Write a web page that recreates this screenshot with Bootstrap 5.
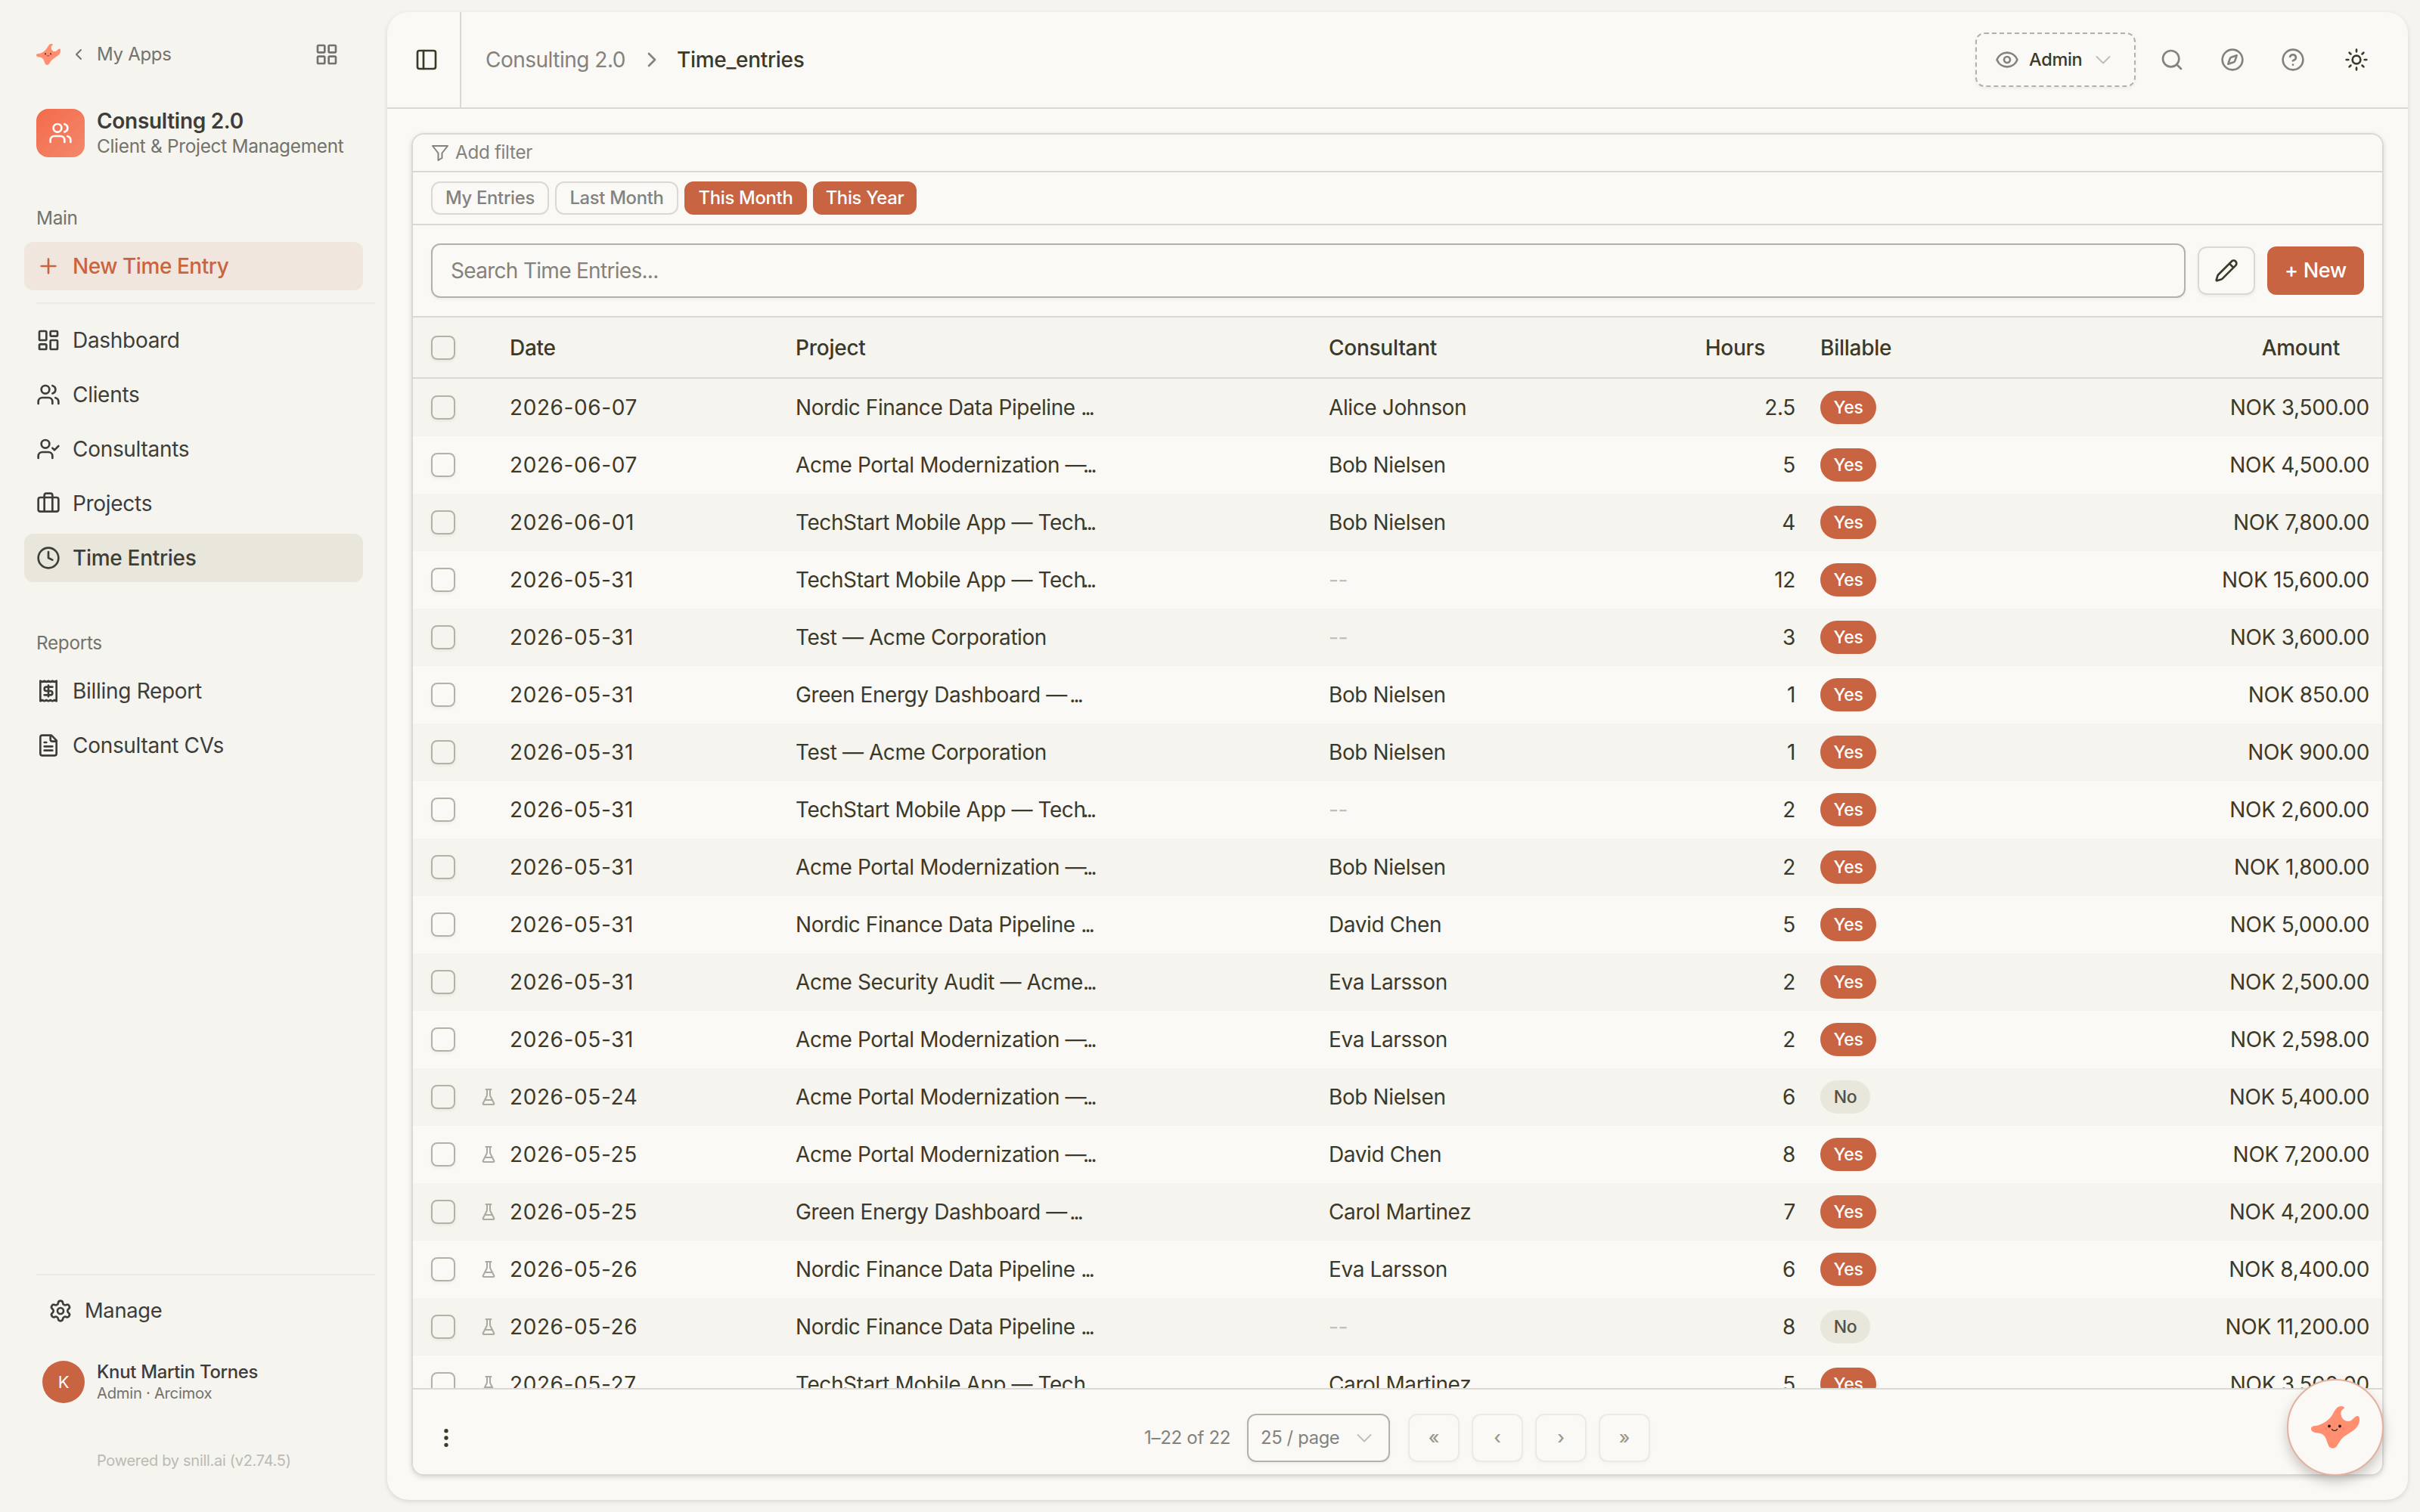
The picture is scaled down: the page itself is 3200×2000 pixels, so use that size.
<!DOCTYPE html>
<html lang="en">
<head>
    <meta charset="UTF-8">
    <title>Time Entries</title>
    <link rel="stylesheet" href="https://cdn.jsdelivr.net/npm/bootstrap@5.3.2/dist/css/bootstrap.min.css">
    <style>
        html {
            font-size: 32px;
        }
        body {
            width: 3200px;
            height: 2000px;
            overflow: hidden;
            background-color: #f5f4ef;
            color: #3d3929;
            font-family: Inter, "Liberation Sans", sans-serif;
            font-size: 28px;
            line-height: 40px;
            font-weight: 400;
            letter-spacing: -0.3px;
        }
        svg {
            display: block;
            flex: none;
            fill: none;
            stroke: currentColor;
            stroke-width: 2;
            stroke-linecap: round;
            stroke-linejoin: round;
        }
        .ic { width: 32px; height: 32px; }
        .ic-sm { width: 24px; height: 24px; }

        /* sidebar */
        .sidebar { width: 512px; padding-top: 16px; color: #3d3d3a; }
        .side-top { height: 112px; padding: 0 64px 0 48px; color: #73726c; font-size: 24px; }
        .star-sm { width: 32px; height: 28px; }
        .back { width: 16px; height: 24px; }
        .side-app { height: 96px; padding-left: 48px; }
        .app-logo { width: 64px; height: 64px; border-radius: 16px; color: #fff; background: linear-gradient(135deg, #f26b4a, #f5886c); }
        .app-name { font-size: 28px; font-weight: 600; line-height: 34px; }
        .app-sub { font-size: 24.4px; line-height: 32px; color: #73726c; }
        .side-label { height: 48px; margin: 40px 0 8px 48px; font-size: 24.3px; color: #73726c; }
        .side-label.second { margin-top: 48px; }
        .side-link { height: 64px; margin: 0 32px 8px; padding: 0 16px; gap: 16px; border-radius: 12px; color: #3d3d3a; text-decoration: none; }
        .side-link.new { background: #f0e6dd; color: #c96442; font-weight: 500; letter-spacing: -0.45px; margin-bottom: 16px; }
        .side-link.current { background: #e9e6dc; font-weight: 500; }
        .side-link.manage { margin: 15px 0 34px; padding-left: 64px; font-size: 27.3px; }
        .side-line { flex: none; height: 2px; margin-left: 48px; width: 448px; background: #ebeae7; }
        .user { padding-left: 56px; }
        .avatar { width: 56px; height: 56px; background: #c96442; color: #fff; font-size: 22px; }
        .user-name { font-size: 23.9px; font-weight: 500; line-height: 30px; }
        .user-role { font-size: 20.3px; line-height: 26px; color: #73726c; }
        .powered { padding-left: 128px; margin: 56px 0 48px; font-size: 20px; color: #bbbab4; }

        /* main panel */
        .panel { width: 2672px; height: 1968px; margin-top: 16px; border-radius: 28px; background: #faf9f5; box-shadow: 0 2px 6px rgba(0,0,0,.12); }
        .topbar { height: 128px; border-bottom: 2px solid #dad9d4; }
        .toggle { width: 98px; border-right: 2px solid #dad9d4; padding-left: 8px; }
        .crumb { color: #83827d; }
        .crumb-text { letter-spacing: -0.5px; }
        .sep { margin: 0 17px 0 19px; }
        .tools { padding-right: 28px; }
        .role-btn { width: 212px; height: 72px; margin-right: 8px; padding-left: 24px; border: 2px dashed #b4b2a7; border-radius: 12px; font-size: 23.5px; font-weight: 500; box-shadow: 0 2px 4px rgba(0,0,0,.05); }
        .role-name { width: 72px; margin: 0 14px 0 13px; }
        .tool { width: 80px; color: #83827d; }
        .tool.theme { margin-left: 4px; color: #3d3929; }
        .grid-box { margin: 32px 32px 0; height: 1776px; border: 2px solid #dad9d4; border-radius: 16px; box-shadow: 0 2px 6px rgba(0,0,0,.14); overflow: hidden; }
        .filter-row { height: 50px; padding-left: 24px; border-bottom: 2px solid #dad9d4; color: #83827d; font-size: 24.2px; gap: 8px; }
        .chip-row { height: 70px; padding-left: 24px; border-bottom: 2px solid #dad9d4; gap: 8px; }
        .chip { width: 162px; height: 44px; border: 2px solid #dad9d4; border-radius: 12px; color: #83827d; font-size: 23.8px; font-weight: 500; }
        .chip.narrow { width: 156px; }
        .chip.wide { width: 163px; }
        .chip.short { width: 137px; }
        .chip.on { background: #c96442; border-color: #c96442; color: #fff; }
        .search-row { height: 122px; padding: 0 24px; border-bottom: 2px solid #dad9d4; gap: 16px; }
        .search-box { height: 72px; border: 2px solid #b4b2a7; border-radius: 12px; padding-left: 24px; color: #83827d; letter-spacing: -0.7px; box-shadow: 0 2px 4px rgba(0,0,0,.05); }
        .edit-btn { width: 76px; height: 64px; border: 2px solid #dad9d4; border-radius: 12px; box-shadow: 0 2px 4px rgba(0,0,0,.06); }
        .new-btn { width: 128px; height: 64px; border-radius: 12px; background: #c96442; color: #fff; font-weight: 500; font-size: 27px; }

        /* entries */
        .line { display: grid; grid-template-columns: 64px 40px 378px 705px 420px 230px 230px 1fr; padding: 0 17px 0 24px; height: 76px; align-items: center; flex: none; }
        .line:nth-child(odd) { background: #f5f4ef; }
        .line.head-line { height: 81px; border-bottom: 2px solid #dad9d4; background: #f5f4ef; font-weight: 500; letter-spacing: -0.25px; }
        .head-line .num { padding-right: 40px; }
        .head-line .text-end { padding-right: 39px; }
        .tick { width: 32px; height: 32px; border: 2px solid #b4b2a7; border-radius: 8px; box-shadow: 0 2px 4px rgba(0,0,0,.06); }
        .flask { width: 24px; height: 24px; color: #aaa9a2; }
        .date { letter-spacing: 0.6px; }
        .project { letter-spacing: -0.42px; }
        .cut { letter-spacing: -2.8px; }
        .cut.dash { margin-left: -4px; }
        .person { letter-spacing: -0.38px; }
        .num { width: 197px; text-align: right; }
        .pill { display: block; height: 44px; line-height: 44px; border-radius: 22px; text-align: center; font-size: 23px; font-weight: 500; }
        .pill.yes { width: 74px; background: #c96442; color: #fff; }
        .pill.no { width: 66px; background: #e9e6dc; color: #535146; }
        .none { color: #bfbeb8; }
        .rows { height: 1335px; overflow: hidden; }

        /* footer */
        .foot { height: 114px; border-top: 2px solid #dad9d4; color: #83827d; font-size: 24px; padding: 16px 0 0 28px; }
        .dots { color: #3d3929; }
        .range { width: 116px; margin: 0 20px 0 907px; white-space: nowrap; }
        .page-size { width: 189px; height: 64px; border: 2px solid #b4b2a7; border-radius: 12px; padding: 0 20px 0 16px; font-size: 23.7px; box-shadow: 0 2px 4px rgba(0,0,0,.05); }
        .pager { gap: 16px; margin-left: 24px; }
        .pg { width: 68px; height: 64px; border: 2px solid #ebeae6; border-radius: 12px; font-weight: 500; color: #9b9988; box-shadow: 0 2px 4px rgba(0,0,0,.03); }
        .helper { position: absolute; left: 3024px; top: 1824px; width: 128px; height: 128px; border: 2px solid #e5b09e; border-radius: 50%; background: #faf9f5; box-shadow: 0 8px 16px rgba(0,0,0,.2); }
        .helper svg { width: 64px; height: 56px; }
    </style>
</head>
<body class="d-flex">

<svg class="d-none">
    <symbol id="star" viewBox="0 0 64 56">
        <path fill="#ff8f70" stroke="none" d="M0 30C0 27 3 26 6 26C14 25 24 19 29 10C32 4 35 0 40 0C42 0 44 1 44 2.500C44 3.500 42 3.500 41 5C37 10 41 20 49 20C55 20 57 13 61.500 13C64 13 64.500 17 64 20C62 30 54 33 47 38C39 43 38 47 34.500 52C32 57 25 57 23 52C20.500 46 20 42 17 39C13 34.500 8 36 4 34.500C1.500 33.500 0 32 0 30Z"/>
        <circle cx="24" cy="26.500" r="2" fill="#2b211d" stroke="none"/><circle cx="38" cy="26.500" r="2" fill="#2b211d" stroke="none"/>
        <circle cx="19.500" cy="30" r="2" fill="#ff7d76" stroke="none"/><circle cx="42.500" cy="30" r="2" fill="#ff7d76" stroke="none"/>
        <path d="M27.500 30.500C29 33 33 33 34.500 30.500" stroke="#2b211d" stroke-width="1.300"/>
    </symbol>
    <symbol id="users" viewBox="0 0 24 24"><path d="M16 21v-2a4 4 0 0 0-4-4H6a4 4 0 0 0-4 4v2"/><circle cx="9" cy="7" r="4"/><path d="M22 21v-2a4 4 0 0 0-3-3.870M16 3.130a4 4 0 0 1 0 7.750"/></symbol>
    <symbol id="down" viewBox="0 0 24 24"><path d="m3.500 8 8.500 8.500 8.500-8.500"/></symbol>
    <symbol id="flask" viewBox="0 0 24 24"><path d="M10 2v7.530a2 2 0 0 1-.210.900L4.720 20.550a1 1 0 0 0 .900 1.450h12.760a1 1 0 0 0 .900-1.450l-5.070-10.120a2 2 0 0 1-.210-.900V2M8.500 2h7M7 16h10"/></symbol>
</svg>

<aside class="sidebar flex-shrink-0 d-flex flex-column">
    <div class="side-top d-flex align-items-center">
        <svg class="star-sm"><use href="#star"/></svg>
        <svg class="back ms-2" viewBox="0 0 16 24"><path d="m11 6-6 6 6 6"/></svg>
        <span class="ms-2">My Apps</span>
        <svg class="ic ms-auto" viewBox="0 0 24 24"><rect x="3" y="3" width="7" height="7" rx="1"/><rect x="14" y="3" width="7" height="7" rx="1"/><rect x="14" y="14" width="7" height="7" rx="1"/><rect x="3" y="14" width="7" height="7" rx="1"/></svg>
    </div>
    <div class="side-app d-flex align-items-center">
        <div class="app-logo d-flex align-items-center justify-content-center"><svg class="ic"><use href="#users"/></svg></div>
        <div class="ms-2">
            <div class="app-name">Consulting 2.0</div>
            <div class="app-sub">Client &amp; Project Management</div>
        </div>
    </div>
    <div class="side-label d-flex align-items-center">Main</div>
    <a href="#" class="side-link new d-flex align-items-center"><svg class="ic" viewBox="0 0 24 24"><path d="M5 12h14M12 5v14"/></svg>New Time Entry</a>
    <div class="side-line"></div>
    <nav class="mt-2">
        <a href="#" class="side-link d-flex align-items-center"><svg class="ic" viewBox="0 0 24 24"><rect x="3" y="3" width="7" height="9" rx="1"/><rect x="14" y="3" width="7" height="5" rx="1"/><rect x="14" y="12" width="7" height="9" rx="1"/><rect x="3" y="16" width="7" height="5" rx="1"/></svg>Dashboard</a>
        <a href="#" class="side-link d-flex align-items-center"><svg class="ic"><use href="#users"/></svg>Clients</a>
        <a href="#" class="side-link d-flex align-items-center"><svg class="ic" viewBox="0 0 24 24"><path d="m16 11 2 2 4-4M16 21v-2a4 4 0 0 0-4-4H6a4 4 0 0 0-4 4v2"/><circle cx="9" cy="7" r="4"/></svg>Consultants</a>
        <a href="#" class="side-link d-flex align-items-center"><svg class="ic" viewBox="0 0 24 24"><path d="M16 20V4a2 2 0 0 0-2-2h-4a2 2 0 0 0-2 2v16"/><rect x="2" y="6" width="20" height="14" rx="2"/></svg>Projects</a>
        <a href="#" class="side-link current d-flex align-items-center"><svg class="ic" viewBox="0 0 24 24"><circle cx="12" cy="12" r="10"/><path d="M12 6v6l4 2"/></svg>Time Entries</a>
    </nav>
    <div class="side-label second d-flex align-items-center">Reports</div>
    <nav>
        <a href="#" class="side-link d-flex align-items-center"><svg class="ic" viewBox="0 0 24 24"><path d="M4 2v20l2-1 2 1 2-1 2 1 2-1 2 1 2-1 2 1V2l-2 1-2-1-2 1-2-1-2 1-2-1-2 1ZM16 8h-6a2 2 0 1 0 0 4h4a2 2 0 1 1 0 4H8M12 17.500v-11"/></svg>Billing Report</a>
        <a href="#" class="side-link d-flex align-items-center"><svg class="ic" viewBox="0 0 24 24"><path d="M15 2H6a2 2 0 0 0-2 2v16a2 2 0 0 0 2 2h12a2 2 0 0 0 2-2V7ZM14 2v4a2 2 0 0 0 2 2h4M10 9H8M16 13H8M16 17H8"/></svg>Consultant CVs</a>
    </nav>
    <div class="side-line mt-auto"></div>
    <a href="#" class="side-link manage d-flex align-items-center"><svg class="ic" viewBox="0 0 24 24"><path d="M9.671 4.136a2.340 2.340 0 0 1 4.659 0 2.340 2.340 0 0 0 3.319 1.915 2.340 2.340 0 0 1 2.330 4.033 2.340 2.340 0 0 0 0 3.831 2.340 2.340 0 0 1-2.330 4.033 2.340 2.340 0 0 0-3.319 1.915 2.340 2.340 0 0 1-4.659 0 2.340 2.340 0 0 0-3.320-1.915 2.340 2.340 0 0 1-2.330-4.033 2.340 2.340 0 0 0 0-3.831A2.340 2.340 0 0 1 6.350 6.051a2.340 2.340 0 0 0 3.319-1.915"/><circle cx="12" cy="12" r="3"/></svg>Manage</a>
    <div class="user d-flex align-items-center">
        <div class="avatar rounded-circle d-flex align-items-center justify-content-center">K</div>
        <div class="ms-2">
            <div class="user-name">Knut Martin Tornes</div>
            <div class="user-role">Admin · Arcimox</div>
        </div>
    </div>
    <div class="powered">Powered by snill.ai (v2.74.5)</div>
</aside>

<main class="panel flex-shrink-0">
    <header class="topbar d-flex align-items-stretch">
        <div class="toggle d-flex align-items-center justify-content-center"><svg class="ic" viewBox="0 0 24 24"><rect x="3" y="3" width="18" height="18" rx="2"/><path d="M9 3v18"/></svg></div>
        <div class="d-flex align-items-center ms-3">
            <span class="crumb crumb-text">Consulting 2.0</span>
            <svg class="ic crumb sep" viewBox="0 0 24 24"><path d="m9 18 6-6-6-6"/></svg>
            <span class="fw-medium">Time_entries</span>
        </div>
        <div class="d-flex align-items-center ms-auto tools">
            <div class="role-btn d-flex align-items-center">
                <svg class="ic crumb" viewBox="0 0 24 24"><path d="M2.060 12.350a1 1 0 0 1 0-.700 10.750 10.750 0 0 1 19.880 0 1 1 0 0 1 0 .700 10.750 10.750 0 0 1-19.880 0"/><circle cx="12" cy="12" r="3"/></svg>
                <span class="role-name">Admin</span>
                <svg class="ic-sm none"><use href="#down"/></svg>
            </div>
            <div class="tool d-flex justify-content-center"><svg class="ic" viewBox="0 0 24 24"><circle cx="11" cy="11" r="8"/><path d="m21 21-4.300-4.300"/></svg></div>
            <div class="tool d-flex justify-content-center"><svg class="ic" viewBox="0 0 24 24"><circle cx="12" cy="12" r="10"/><path d="m16.240 7.760-1.800 5.410a2 2 0 0 1-1.270 1.270l-5.410 1.800 1.800-5.410a2 2 0 0 1 1.270-1.270z"/></svg></div>
            <div class="tool d-flex justify-content-center"><svg class="ic" viewBox="0 0 24 24"><circle cx="12" cy="12" r="10"/><path d="M9.090 9a3 3 0 0 1 5.830 1c0 2-3 3-3 3M12 17h.010"/></svg></div>
            <div class="tool theme d-flex justify-content-center"><svg class="ic" viewBox="0 0 24 24"><circle cx="12" cy="12" r="4"/><path d="M12 2v2M12 20v2M4.930 4.930l1.410 1.410M17.660 17.660l1.410 1.410M2 12h2M20 12h2M6.340 17.660l-1.410 1.410M19.070 4.930l-1.410 1.410"/></svg></div>
        </div>
    </header>

    <section class="grid-box d-flex flex-column">
        <div class="filter-row d-flex align-items-center flex-shrink-0">
            <svg class="ic-sm" viewBox="0 0 24 24"><path d="M2 3h20l-7.500 9.500v6.500l-5 3v-9.500z"/></svg>Add filter
        </div>
        <div class="chip-row d-flex align-items-center flex-shrink-0">
            <span class="chip narrow d-flex align-items-center justify-content-center">My Entries</span>
            <span class="chip wide d-flex align-items-center justify-content-center">Last Month</span>
            <span class="chip on d-flex align-items-center justify-content-center">This Month</span>
            <span class="chip on short d-flex align-items-center justify-content-center">This Year</span>
        </div>
        <div class="search-row d-flex align-items-center flex-shrink-0">
            <div class="search-box flex-grow-1 d-flex align-items-center">Search Time Entries...</div>
            <div class="edit-btn d-flex align-items-center justify-content-center"><svg class="ic" viewBox="0 0 24 24"><path d="M21.170 6.810a1 1 0 0 0-3.990-3.990L3.840 16.170a2 2 0 0 0-.500.830l-1.320 4.350a.500.500 0 0 0 .620.620l4.350-1.320a2 2 0 0 0 .830-.500zM15 5l4 4"/></svg></div>
            <div class="new-btn d-flex align-items-center justify-content-center">+ New</div>
        </div>
        <div class="line head-line">
            <span class="tick"></span><span></span><span>Date</span><span>Project</span><span>Consultant</span>
            <span class="num">Hours</span><span>Billable</span><span class="text-end">Amount</span>
        </div>
        <div class="rows d-flex flex-column flex-shrink-0" id="rows"></div>
        <div class="foot d-flex align-items-center flex-shrink-0">
            <svg class="ic dots" viewBox="0 0 24 24"><path d="M12 5h.010M12 12h.010M12 19h.010" stroke-width="4"/></svg>
            <span class="range">1–22 of 22</span>
            <div class="page-size d-flex align-items-center justify-content-between">25 / page<svg class="ic-sm none"><use href="#down"/></svg></div>
            <div class="d-flex pager">
                <span class="pg d-flex align-items-center justify-content-center">«</span>
                <span class="pg d-flex align-items-center justify-content-center">‹</span>
                <span class="pg d-flex align-items-center justify-content-center">›</span>
                <span class="pg d-flex align-items-center justify-content-center">»</span>
            </div>
        </div>
    </section>
</main>

<div class="helper d-flex align-items-center justify-content-center"><svg><use href="#star"/></svg></div>

<script src="https://cdn.jsdelivr.net/npm/bootstrap@5.3.2/dist/js/bootstrap.bundle.min.js"></script>
<script>
const cut = '<span class="cut">...</span>';
const cutDash = '<span class="cut dash">...</span>';
const nordic = "Nordic Finance Data Pipeline " + cut;
const acme = "Acme Portal Modernization —" + cutDash;
const tech = "TechStart Mobile App — Tech" + cutDash;
const green = "Green Energy Dashboard — " + cutDash;
const test = "Test — Acme Corporation";
// date, project, consultant, hours, billable, amount, sample
const entries = [
    ["2026-06-07", nordic, "Alice Johnson", "2.5", 1, "3,500.00", 0],
    ["2026-06-07", acme, "Bob Nielsen", "5", 1, "4,500.00", 0],
    ["2026-06-01", tech, "Bob Nielsen", "4", 1, "7,800.00", 0],
    ["2026-05-31", tech, "", "12", 1, "15,600.00", 0],
    ["2026-05-31", test, "", "3", 1, "3,600.00", 0],
    ["2026-05-31", green, "Bob Nielsen", "1", 1, "850.00", 0],
    ["2026-05-31", test, "Bob Nielsen", "1", 1, "900.00", 0],
    ["2026-05-31", tech, "", "2", 1, "2,600.00", 0],
    ["2026-05-31", acme, "Bob Nielsen", "2", 1, "1,800.00", 0],
    ["2026-05-31", nordic, "David Chen", "5", 1, "5,000.00", 0],
    ["2026-05-31", "Acme Security Audit — Acme" + cut, "Eva Larsson", "2", 1, "2,500.00", 0],
    ["2026-05-31", acme, "Eva Larsson", "2", 1, "2,598.00", 0],
    ["2026-05-24", acme, "Bob Nielsen", "6", 0, "5,400.00", 1],
    ["2026-05-25", acme, "David Chen", "8", 1, "7,200.00", 1],
    ["2026-05-25", green, "Carol Martinez", "7", 1, "4,200.00", 1],
    ["2026-05-26", nordic, "Eva Larsson", "6", 1, "8,400.00", 1],
    ["2026-05-26", nordic, "", "8", 0, "11,200.00", 1],
    ["2026-05-27", tech, "Carol Martinez", "5", 1, "3,500.00", 1]
];
document.getElementById("rows").innerHTML = entries.map(e => `
    <div class="line">
        <span class="tick"></span>
        <span>${e[6] ? '<svg class="flask"><use href="#flask"/></svg>' : ""}</span>
        <span class="date">${e[0]}</span>
        <span class="project">${e[1]}</span>
        <span class="person">${e[2] || '<span class="none">--</span>'}</span>
        <span class="num">${e[3]}</span>
        <span class="pill ${e[4] ? "yes" : "no"}">${e[4] ? "Yes" : "No"}</span>
        <span class="text-end">NOK ${e[5]}</span>
    </div>`).join("");
</script>
</body>
</html>
